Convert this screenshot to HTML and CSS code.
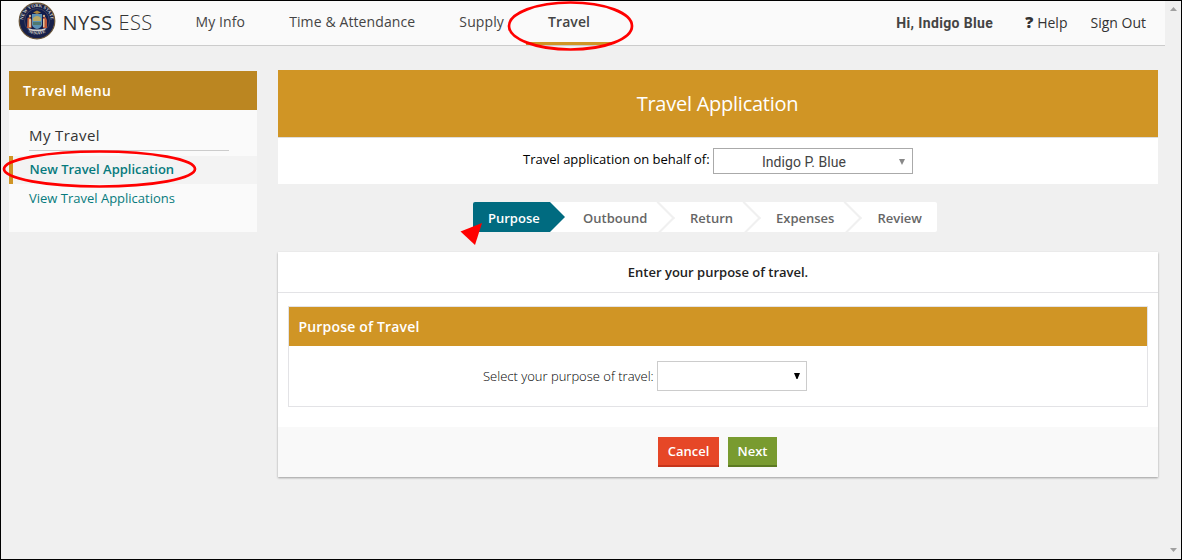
FILE: index.html
```html
<!DOCTYPE html>
<html lang="en">
<head>
<meta charset="utf-8">
<title>NYSS ESS - Travel Application</title>
<link rel="stylesheet" href="styles.css">
</head>
<body>
<div class="window">
  <div class="page">
    <header class="topbar">
      <svg class="seal" viewBox="0 0 38 38">
        <defs>
          <path id="arc-top" d="M5.300 20.500A13.800 13.800 0 1 1 32.700 20.500"/>
          <path id="arc-bottom" d="M6 26A16.300 16.300 0 0 0 32 26"/>
        </defs>
        <circle cx="19" cy="19" r="17.800" fill="#17204a" stroke="#6b5638" stroke-width="1.200"/>
        <circle cx="19" cy="19" r="12.400" fill="#101b4b" stroke="#545064" stroke-width=".7"/>
        <path d="M14 12h10v11q-1 3-5 4-4-1-5-4z" fill="#5c91b5"/>
        <path d="M15 16q4-4 8 0v3h-8z" fill="#b8a866"/>
        <path d="M15 20h8v3h-8z" fill="#4f786f"/>
        <path d="M9.500 16l2.500-1 1.500 3v8h-4.500z" fill="#c1603a"/>
        <path d="M25 16l2.500-1 1.500 3v8h-4z" fill="#bb5638"/>
        <path d="M11 17h2v8h-2zM25 17h1.500v8H25z" fill="#dfc39a"/>
        <circle cx="12" cy="14" r="1.200" fill="#d2ad82"/><circle cx="26" cy="14" r="1.200" fill="#d2ad82"/>
        <path d="M15 10.500l4-2 4 2-4 1.500z" fill="#a8843e"/>
        <path d="M10 26q9 3 18 0l-1 2q-8 2.500-16 0z" fill="#d1d0cc"/>
        <text class="seal-text"><textPath href="#arc-top" startOffset="50%" text-anchor="middle">NEW YORK STATE</textPath></text>
        <text class="seal-text"><textPath href="#arc-bottom" startOffset="50%" text-anchor="middle">SENATE</textPath></text>
      </svg>
      <div class="brand"><span class="brand-org">NYSS</span> ESS</div>
      <nav class="tabs">
        <a class="tab">My Info</a>
        <a class="tab">Time &amp; Attendance</a>
        <a class="tab">Supply</a>
        <a class="tab tab-active">Travel</a>
      </nav>
      <div class="account">
        <span class="greeting">Hi, Indigo Blue</span>
        <span class="help"><b class="help-mark">?</b>Help</span>
        <span class="signout">Sign Out</span>
      </div>
    </header>
    <div class="columns">
      <aside class="menu">
        <h2 class="menu-title">Travel Menu</h2>
        <h3 class="menu-section">My Travel</h3>
        <a class="menu-link menu-link-active">New Travel Application</a>
        <a class="menu-link">View Travel Applications</a>
      </aside>
      <main class="content">
        <h1 class="page-title">Travel Application</h1>
        <div class="behalf">
          <span class="behalf-label">Travel application on behalf of:</span>
          <div class="person"><span class="person-name">Indigo P. Blue</span><svg class="person-arrow" viewBox="0 0 6 6"><path d="M0 0h6L3 6z" fill="#888"/></svg></div>
        </div>
        <div class="steps">
          <div class="step step-purpose"><span>Purpose</span></div>
          <div class="step step-outbound"><span>Outbound</span></div>
          <div class="step step-return"><span>Return</span></div>
          <div class="step step-expenses"><span>Expenses</span></div>
          <div class="step step-review"><span>Review</span></div>
        </div>
        <section class="card">
          <p class="card-intro"><span>Enter your purpose of travel.</span></p>
          <div class="purpose">
            <h2 class="purpose-title"><span>Purpose of Travel</span></h2>
            <div class="purpose-row">
              <span class="purpose-label">Select your purpose of travel:</span>
              <div class="purpose-select"><svg class="purpose-arrow" viewBox="0 0 6 6"><path d="M0 0h6L3.500 6h-1z"/></svg></div>
            </div>
          </div>
          <div class="actions">
            <button class="btn btn-cancel">Cancel</button>
            <button class="btn btn-next">Next</button>
          </div>
        </section>
      </main>
    </div>
  </div>
  <div class="scrollbar">
    <svg class="scroll-arrow" viewBox="0 0 7 4"><path d="M0 4L3.500 0 7 4z"/></svg>
    <svg class="scroll-arrow" viewBox="0 0 7 4"><path d="M0 0h7L3.500 4z"/></svg>
  </div>
  <svg class="annotations" viewBox="0 0 1182 560">
    <ellipse cx="570.500" cy="26" rx="61.500" ry="23.500"/>
    <ellipse cx="99.500" cy="169" rx="95.500" ry="17.500"/>
    <path class="pointer" d="M482 223L460.500 231.500 475 245z"/>
  </svg>
</div>
</body>
</html>
```
FILE: styles.css
```css
* { box-sizing: border-box; }
body { margin: 0; font-family: "Open Sans", sans-serif; font-size: 13px; color: #222; }
h1, h2, h3, p { margin: 0; }
.window { position: relative; display: flex; width: 1182px; height: 560px; border: 1px solid #000; background: #f0f0f0; overflow: hidden; white-space: nowrap; }
.page { width: 1164px; }
.topbar { display: flex; height: 45px; background: #fafafa; border-bottom: 1px solid #ccc; }
.seal { width: 38px; height: 38px; margin: 1px 0 0 16.500px; }
.seal-text { font: bold 4.600px "Liberation Serif", serif; fill: #d5d2c6; }
.brand { width: 110px; margin-left: 7px; font-size: 20px; font-weight: 300; line-height: 43px; letter-spacing: .5px; color: #333; }
.brand-org { font-weight: 400; }
.tabs { display: flex; margin-left: 1px; }
.tab { padding: 0 22px; font-size: 14px; line-height: 42px; color: #444; height: 44px; letter-spacing: .11px; }
.tab-active { font-weight: 600; border-bottom: 3px solid #d09525; }
.account { display: flex; flex: 1; justify-content: flex-end; padding-right: 19px; font-size: 14px; line-height: 43px; color: #333; }
.greeting { margin-right: 32px; font-family: Roboto, sans-serif; font-weight: 700; line-height: 45px; letter-spacing: .36px; color: #444; }
.help { margin-right: 23px; }
.help-mark { display: inline-block; width: 12px; font-weight: 800; font-size: 16px; }
.columns { display: flex; align-items: flex-start; padding: 24px 7px 0 8px; }
.menu { width: 248px; height: 161px; margin-top: 1px; background: #fafafa; }
.menu-title { height: 39px; padding-left: 14px; background: #bb8621; color: #fff; font-size: 14px; font-weight: 600; line-height: 39px; letter-spacing: .4px; }
.menu-section { height: 27px; margin: 14px 28px 5px 20px; border-bottom: 1px solid #ccc; font-size: 15px; font-weight: 400; line-height: 22px; letter-spacing: .4px; color: #333; }
.menu-link { display: block; height: 28px; margin-bottom: 1px; padding-left: 20px; font-size: 13px; line-height: 27px; color: #077a7d; }
.menu-link-active { padding-left: 16.500px; border-left: 4px solid #d09525; background: #f3f3f3; font-weight: 600; }
.content { width: 880px; margin-left: 21px; }
.page-title { height: 67px; background: #d09525; color: #fff; font-size: 20px; font-weight: 400; line-height: 67px; text-align: center; letter-spacing: -.25px; padding-right: 1px; }
.behalf { display: flex; height: 47px; padding: 10px 0 0 245px; background: #fff; border-top: 1px solid #ddd; color: #000; }
.behalf-label { width: 190px; line-height: 22px; }
.person { display: flex; align-items: center; width: 200px; height: 26px; border: 1px solid #aaa; padding: 2px 7px 0 0; background: #fff; color: #444; font: 14px Roboto, sans-serif; }
.person-name { flex: 1; padding-right: 5px; text-align: center; letter-spacing: .07px; }
.person-arrow { width: 6px; height: 6px; }
.steps { display: flex; width: 464px; height: 30px; margin: 18px 0 20px 195px; background: #fff; border-radius: 2px; overflow: hidden; font-weight: 600; line-height: 33px; color: #666; }
.step { position: relative; height: 30px; }
.step-purpose { width: 93px; padding-left: 15px; background: #006b80; color: #fff; clip-path: polygon(0 0, 77px 0, 92px 50%, 77px 100%, 0 100%); }
.step-outbound { width: 108px; padding-left: 17px; }
.step-return { width: 86px; padding-left: 16px; }
.step-expenses { width: 101px; padding-left: 16px; }
.step-review { width: 76px; padding-left: 16.500px; }
.step-outbound::after, .step-return::after, .step-expenses::after { content: ""; position: absolute; top: 4px; right: 4px; width: 22px; height: 22px; border: solid #f0f0f0; border-width: 2px 2px 0 0; transform: rotate(45deg); }
.card { height: 225px; background: #fff; box-shadow: 0 1px 2px rgba(0,0,0,.35); }
.card-intro { height: 41px; border-bottom: 1px solid #e3e3e6; text-align: center; font-weight: 600; line-height: 40px; color: #222; }
.purpose { height: 101px; margin: 13px 10px 20px; border: 1px solid #e3e3e6; }
.purpose-title { height: 39px; padding-left: 9.500px; background: #d09525; color: #fff; font-size: 14px; font-weight: 600; line-height: 39px; letter-spacing: .17px; }
.purpose-row { display: flex; padding: 15px 0 0 194px; font-weight: 300; color: #000; }
.purpose-label { width: 174px; line-height: 31px; }
.purpose-select { display: flex; justify-content: flex-end; align-items: center; width: 150px; height: 30px; padding-right: 6px; border: 1px solid #ccc; }
.purpose-arrow { width: 6px; height: 6px; }
.actions { display: flex; gap: 9px; height: 50px; padding: 10px 0 0 380px; background: #f9f9f9; }
.btn { height: 30px; padding: 0 0 1px; border: 0; border-bottom: 2px solid; color: #fff; font: 600 13px "Open Sans", sans-serif; }
.btn-cancel { width: 61px; background: #e64727; border-color: #c6341a; }
.btn-next { width: 49px; background: #799b30; border-color: #5c7a22; }
.scrollbar { display: flex; flex: 1; flex-direction: column; justify-content: space-between; align-items: center; padding: 6px 0 7px; }
.scroll-arrow { width: 7px; height: 4px; fill: #a0a0a0; }
.annotations { position: absolute; top: -1px; left: -1px; width: 1182px; height: 560px; fill: none; stroke: #f00; stroke-width: 2.700px; pointer-events: none; }
.pointer { fill: #f00; stroke: none; }
```
